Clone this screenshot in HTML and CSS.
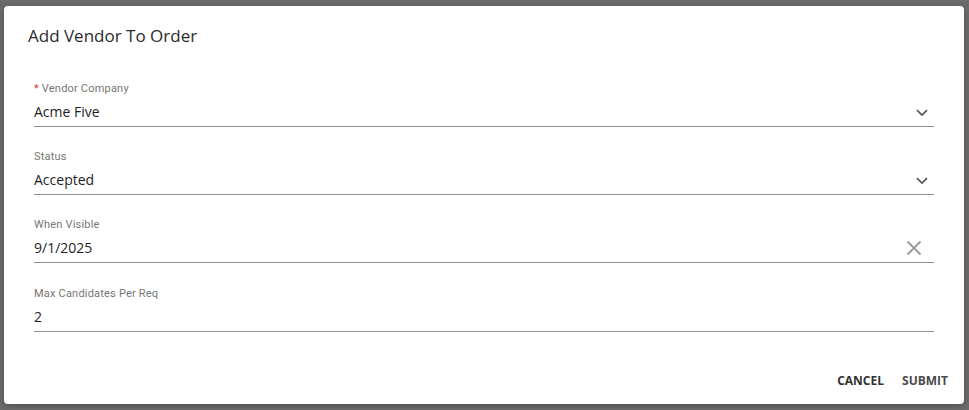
FILE: index.html
```html
<!DOCTYPE html>
<html>
<head>
<meta charset="utf-8">
<link rel="stylesheet" href="styles.css">
</head>
<body>
<div class="dialog">
  <h2 class="title">Add Vendor To Order</h2>
  <div class="fields">
    <div class="field">
      <div class="label"><span class="req">*</span> Vendor Company</div>
      <div class="control">
        <span class="value">Acme Five</span>
        <svg class="chev" width="12" height="8" viewBox="0 0 12 8"><path d="M1 1.2 L6 6 L11 1.2" fill="none" stroke="#555" stroke-width="1.7"/></svg>
      </div>
    </div>
    <div class="field">
      <div class="label">Status</div>
      <div class="control">
        <span class="value">Accepted</span>
        <svg class="chev" width="12" height="8" viewBox="0 0 12 8"><path d="M1 1.2 L6 6 L11 1.2" fill="none" stroke="#555" stroke-width="1.7"/></svg>
      </div>
    </div>
    <div class="field field-wide">
      <div class="label">When Visible</div>
      <div class="control">
        <span class="value">9/1/2025</span>
        <svg class="clear" width="16" height="16" viewBox="0 0 16 16"><path d="M1.5 1.5 L14.5 14.5 M14.5 1.5 L1.5 14.5" fill="none" stroke="#9a9a9a" stroke-width="1.8"/></svg>
      </div>
    </div>
    <div class="field">
      <div class="label">Max Candidates Per Req</div>
      <div class="control">
        <span class="value">2</span>
      </div>
    </div>
  </div>
  <div class="actions">
    <button class="btn">CANCEL</button>
    <button class="btn">SUBMIT</button>
  </div>
</div>
</body>
</html>
```
FILE: styles.css
```css
html, body {
  margin: 0;
  padding: 0;
  background: #6b6b6b;
  width: 969px;
  height: 410px;
  overflow: hidden;
}
.dialog {
  margin: 6px 0 0 4px;
  width: 960px;
  height: 398px;
  background: #fff;
  border-radius: 4px;
  display: flex;
  flex-direction: column;
  box-sizing: border-box;
  box-shadow: 0 2px 6px rgba(0,0,0,0.25);
}
.title {
  margin: 0;
  padding: 18px 0 0 24px;
  font-family: "Open Sans", sans-serif;
  font-weight: 400;
  font-size: 17px;
  line-height: 24px;
  color: #2b2b2b;
}
.fields {
  padding: 34px 30px 0 30px;
}
.field {
  margin-bottom: 23px;
}
.field-wide {
  margin-bottom: 24px;
}
.label {
  font-family: Roboto, sans-serif;
  font-size: 11px;
  line-height: 14px;
  color: #767676;
  letter-spacing: 0.2px;
}
.req {
  color: #e53935;
}
.control {
  margin-top: 6px;
  height: 24px;
  border-bottom: 1px solid #8f8f8f;
  display: flex;
  align-items: flex-start;
  justify-content: space-between;
}
.value {
  font-family: "Open Sans", sans-serif;
  font-size: 14px;
  line-height: 20px;
  color: #1e1e1e;
}
.chev {
  margin: 7px 6px 0 0;
}
.clear {
  margin: 2px 12px 0 0;
}
.actions {
  margin-top: auto;
  display: flex;
  justify-content: flex-end;
  gap: 2px;
  padding: 0 8px 6px 0;
}
.btn {
  background: none;
  border: none;
  height: 36px;
  padding: 0 8px;
  font-family: "Open Sans", sans-serif;
  font-weight: 700;
  font-size: 12px;
  color: #333;
}
.btn + .btn {
  color: #4a4a4a;
}
```
